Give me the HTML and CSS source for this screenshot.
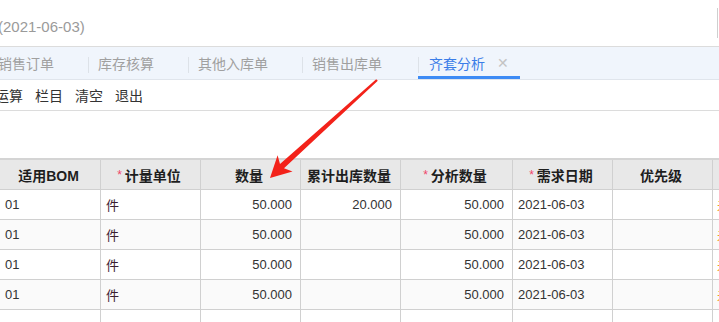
FILE: index.html
```html
<!DOCTYPE html>
<html lang="zh-CN">
<head>
    <meta charset="UTF-8">
    <meta name="viewport" content="width=device-width, initial-scale=1.0">
    <title>齐套分析</title>
    <link rel="stylesheet" href="styles.css">
</head>
<body>
    <div id="page">
        <div class="title-bar">
            <span class="bill-date">(2021-06-03)</span>
            <span class="title-edge"></span>
        </div>

        <div class="tabs">
            <div class="tab"><span>销售订单</span><i class="close">✕</i></div>
            <div class="tab"><span>库存核算</span><i class="close">✕</i></div>
            <div class="tab"><span>其他入库单</span><i class="close">✕</i></div>
            <div class="tab wide"><span>销售出库单</span><i class="close">✕</i></div>
            <div class="tab active"><span>齐套分析</span><i class="close">✕</i></div>
        </div>

        <div class="toolbar">
            <a>运算</a>
            <a>栏目</a>
            <a>清空</a>
            <a>退出</a>
        </div>

        <div class="grid">
            <div class="cell head">适用BOM</div>
            <div class="cell head"><b class="req">*</b>计量单位</div>
            <div class="cell head">数量</div>
            <div class="cell head">累计出库数量</div>
            <div class="cell head"><b class="req">*</b>分析数量</div>
            <div class="cell head"><b class="req">*</b>需求日期</div>
            <div class="cell head">优先级</div>
            <div class="cell head"></div>

            <div class="cell">01</div><div class="cell unit">件</div><div class="cell num">50.000</div><div class="cell num">20.000</div><div class="cell num">50.000</div><div class="cell">2021-06-03</div><div class="cell"></div><div class="cell state">未齐套</div>
            <div class="cell alt">01</div><div class="cell alt unit">件</div><div class="cell alt num">50.000</div><div class="cell alt num"></div><div class="cell alt num">50.000</div><div class="cell alt">2021-06-03</div><div class="cell alt"></div><div class="cell alt state">未齐套</div>
            <div class="cell">01</div><div class="cell unit">件</div><div class="cell num">50.000</div><div class="cell num"></div><div class="cell num">50.000</div><div class="cell">2021-06-03</div><div class="cell"></div><div class="cell state">未齐套</div>
            <div class="cell alt">01</div><div class="cell alt unit">件</div><div class="cell alt num">50.000</div><div class="cell alt num"></div><div class="cell alt num">50.000</div><div class="cell alt">2021-06-03</div><div class="cell alt"></div><div class="cell alt state">未齐套</div>
            <div class="cell"></div><div class="cell"></div><div class="cell"></div><div class="cell"></div><div class="cell"></div><div class="cell"></div><div class="cell"></div><div class="cell"></div>
        </div>

        <!-- red arrow pointing at the 数量 column -->
        <svg class="arrow" width="719" height="322" viewBox="0 0 719 322">
            <polygon fill="#f3221a" points="270,178 292.5,171.5 284,168.3 377.8,80.8 376.2,79.2 280,164 277.6,155.2"/>
        </svg>
    </div>
</body>
</html>
```

FILE: styles.css
```css
/* General styles */
body {
    margin: 0;
    padding: 0;
    font-family: "Liberation Sans", "Noto Sans CJK SC", sans-serif;
    background: #fff;
    overflow: hidden;
}

#page {
    position: relative;
    width: 719px;
    height: 322px;
    overflow: hidden;
}

/* Title bar */
.title-bar {
    height: 46px;
    display: flex;
    align-items: center;
    border-bottom: 1px solid #dcdcdc;
}

.bill-date {
    margin-left: -2px;
    margin-top: 6px;
    font-size: 15px;
    color: #9a9a9a;
}

.title-edge {
    margin-left: auto;
    width: 1px;
    height: 30px;
    margin-right: 1px;
    background: #cfcfcf;
}

/* Tabs */
.tabs {
    display: flex;
    height: 32px;
    margin-left: -12px;
    background: #f0f5fc;
    border-bottom: 1px solid #e0e5ec;
}

.tab {
    position: relative;
    display: flex;
    align-items: center;
    padding: 0 10px;
    font-size: 14px;
    color: #a0a0a0;
}

.tab.wide { padding-right: 12px; }

.tab + .tab::before {
    content: "";
    position: absolute;
    left: 0;
    top: 10px;
    bottom: 6px;
    width: 1px;
    background: #dde2e8;
}

.tab .close {
    width: 12px;
    margin-left: 12px;
    font-style: normal;
    font-size: 14px;
    color: #c4c4c4;
    visibility: hidden;
}

.tab.active {
    color: #3b7de8;
    padding-left: 11px;
    padding-right: 11px;
}

.tab.active .close { visibility: visible; }

.tab.active::after {
    content: "";
    position: absolute;
    left: 0;
    right: 0;
    bottom: 0;
    height: 3px;
    background: #3d8bf5;
}

/* Toolbar */
.toolbar {
    display: flex;
    gap: 12px;
    height: 30px;
    align-items: center;
    margin-left: -5px;
    font-size: 14px;
    color: #333;
    border-bottom: 1px solid #dcdcdc;
}

/* Grid */
.grid {
    display: grid;
    grid-template-columns: 101px 100px 100px 100px 112px 100px 100px 100px;
    grid-auto-rows: 30px;
    margin-top: 47px;
    border-top: 2px solid #d4d4d4;
    font-size: 13px;
    color: #333;
}

.cell {
    display: flex;
    align-items: center;
    padding: 0 8px 0 5px;
    border-right: 1px solid #d0d0d0;
    border-bottom: 1px solid #d0d0d0;
    white-space: nowrap;
    overflow: hidden;
}

.cell.head {
    height: 29px;
    justify-content: center;
    background: #e8e8e8;
    font-size: 14px;
    font-weight: bold;
    color: #1e1e1e;
}

.grid .cell:nth-child(-n+8) { height: 29px; }

.cell.alt { background: #fafafa; }
.cell.num { justify-content: flex-end; }
.cell.unit { color: #3a2030; }
.cell.state { color: #f0a020; padding-left: 4px; }

.req {
    color: #f0446a;
    font-weight: normal;
    font-size: 12px;
    margin-right: 3px;
}

/* Arrow overlay */
.arrow {
    position: absolute;
    left: 0;
    top: 0;
    pointer-events: none;
}
```
